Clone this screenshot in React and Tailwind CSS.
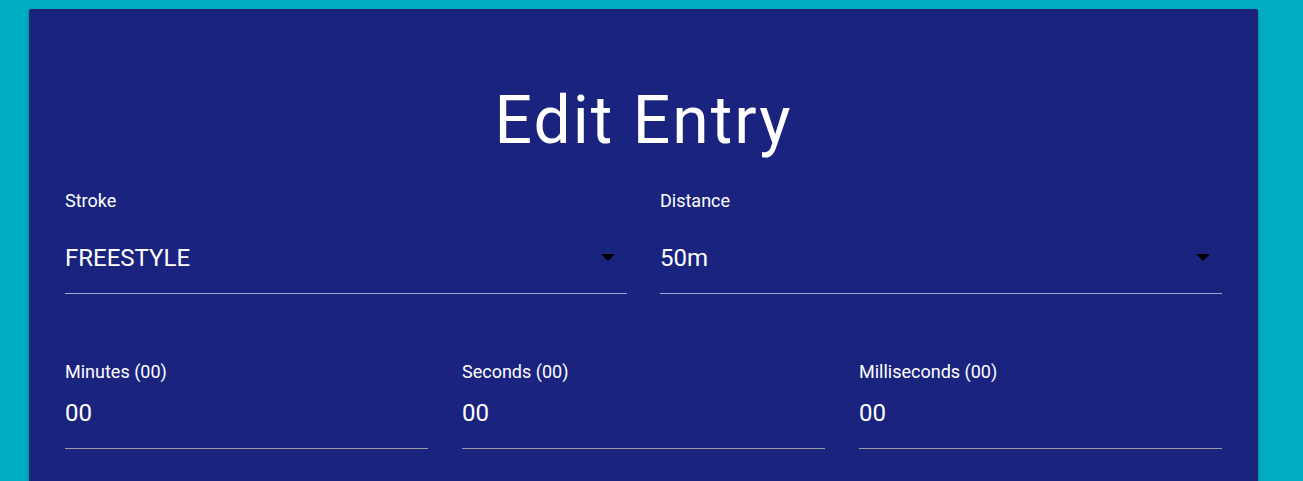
// Edit Entry form card
function Caret() {
  return (
    <svg width="14" height="8" viewBox="0 0 14 8" className="mr-[12px] shrink-0">
      <polygon points="0,0 14,0 7,7" fill="#000000" />
    </svg>
  );
}

function SelectField({ label, value }) {
  return (
    <div className="flex flex-col">
      <label className="text-[18px] leading-[20px] text-white">{label}</label>
      <div className="mt-[32px] flex items-center justify-between">
        <span className="text-[24px] leading-[30px] text-white">{value}</span>
        <Caret />
      </div>
      <div className="mt-[20px] h-px bg-[#a3a6d3]" />
    </div>
  );
}

function TimeField({ label, value }) {
  return (
    <div className="flex flex-col">
      <label className="text-[18px] leading-[20px] text-white">{label}</label>
      <span className="mt-[16px] text-[24px] leading-[30px] text-white">{value}</span>
      <div className="mt-[20px] h-px bg-[#9e9e9e]" />
    </div>
  );
}

export default function App() {
  return (
    <div
      className="min-h-[481px] bg-[#00acc1] pt-[9px] pl-[29px] overflow-hidden"
      style={{ fontFamily: 'Roboto, "Noto Sans", sans-serif' }}
    >
      <div className="w-[1229px] bg-[#1a237e] rounded-[2px] shadow-[0_2px_4px_rgba(0,0,0,0.25)] pt-[79px] pb-[40px] px-[36px] min-h-[480px]">
        <h1 className="text-center text-white text-[66px] leading-[66px] tracking-[2px] font-normal">
          Edit Entry
        </h1>

        <div className="mt-[37px] grid grid-cols-2 gap-x-[33px]">
          <SelectField label="Stroke" value="FREESTYLE" />
          <SelectField label="Distance" value="50m" />
        </div>

        <div className="mt-[68px] grid grid-cols-3 gap-x-[34px]">
          <TimeField label="Minutes (00)" value="00" />
          <TimeField label="Seconds (00)" value="00" />
          <TimeField label="Milliseconds (00)" value="00" />
        </div>
      </div>
    </div>
  );
}
